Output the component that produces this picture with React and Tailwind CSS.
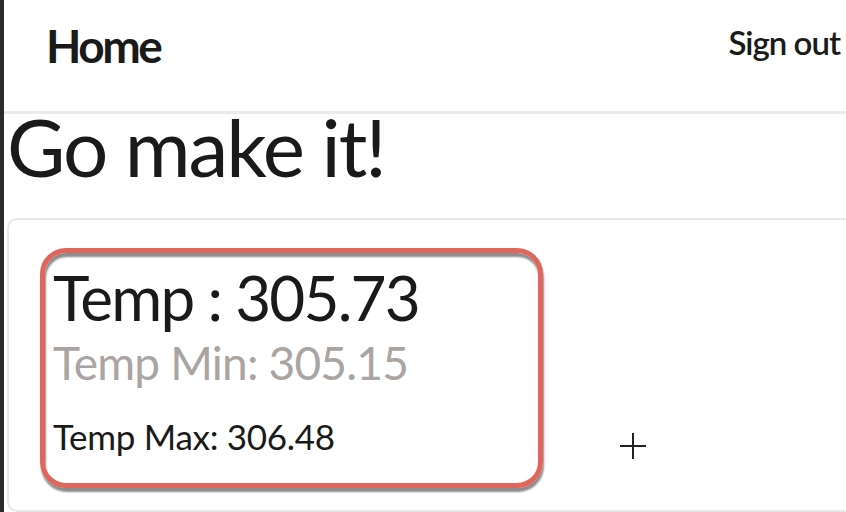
export default function App() {
  const font = { fontFamily: "Lato, 'Open Sans', sans-serif" };
  return (
    <div className="flex h-[512px] w-[846px] overflow-hidden bg-white text-[#1a1a1a]" style={font}>
      <div className="w-[4px] shrink-0 bg-[#2b2b2b]" />
      <div className="flex min-w-0 flex-1 flex-col">
        <header className="flex h-[114px] shrink-0 items-start justify-between border-b-[3px] border-[#ebebeb] pl-[42px] pr-[6px] pt-[23px]">
          <span className="text-[46px] font-bold leading-none tracking-[-2.5px]">Home</span>
          <span className="mt-[3px] text-[33px] font-semibold leading-none tracking-[-1px]">Sign out</span>
        </header>
        <h1 className="-mt-[8px] ml-[3px] text-[80px] leading-none tracking-[-2px]">Go make it!</h1>
        <div className="relative ml-[3px] mt-[32px] flex-1 rounded-l-[10px] border-[2px] border-r-0 border-[#e8e8e8] pl-[31px] pt-[28px]">
          <div className="flex h-[240px] w-[503px] flex-col rounded-[26px] border-[5px] border-[#e0665c] pl-[8px] pt-[13px] shadow-[1px_4px_2px_rgba(0,0,0,0.45),inset_1px_4px_2px_rgba(0,0,0,0.45)]">
            <div className="text-[62px] leading-none tracking-[-1.8px]">Temp : 305.73</div>
            <div className="mt-[12px] text-[46px] leading-none tracking-[-0.8px] text-[#aaa4a2]">Temp Min: 305.15</div>
            <div className="mt-[33px] text-[35px] leading-none tracking-[-0.3px]">Temp Max: 306.48</div>
          </div>
          <svg className="absolute left-[610px] top-[212px]" width="28" height="28" viewBox="0 0 28 28">
            <path d="M14 1V27M1 14H27" stroke="#222" strokeWidth="2" />
          </svg>
        </div>
      </div>
    </div>
  );
}
